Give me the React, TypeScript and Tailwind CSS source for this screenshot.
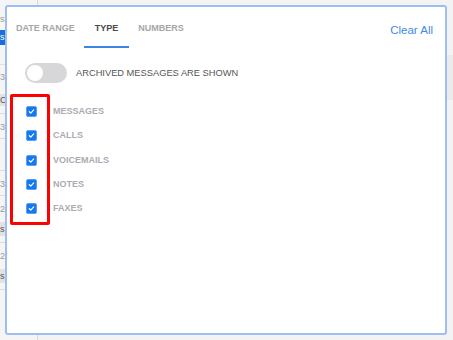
import React from "react";

const items = ["MESSAGES", "CALLS", "VOICEMAILS", "NOTES", "FAXES"];

function Check() {
  return (
    <div className="w-[11px] h-[11px] rounded-[2px] bg-[#1479f0] border border-[#5a9ef5] flex items-center justify-center shrink-0">
      <svg width="7" height="7" viewBox="0 0 8 8">
        <path d="M1.5 4.3 L3.2 5.8 L6.5 2.2" stroke="white" strokeWidth="1.4" fill="none" strokeLinecap="round" strokeLinejoin="round" />
      </svg>
    </div>
  );
}

function SideRow({ date, chip, blue }: { date?: string; chip?: string; blue?: boolean }) {
  return (
    <div className="border-b border-[#dcdcdc] pt-[8px] pb-[6px] flex flex-col gap-[8px]">
      {date && <div className="text-[9px] text-[#9a9a9a] leading-[10px]">{date}</div>}
      {chip && (
        <div className={`h-[14px] text-[9px] leading-[14px] ${blue ? "bg-[#1a6fd6] text-white" : "bg-[#e2e2e2] text-[#555]"}`}>{chip}</div>
      )}
    </div>
  );
}

export default function App() {
  return (
    <div className="relative w-[453px] h-[340px] overflow-hidden bg-[#f3f3f3]" style={{ fontFamily: '"Liberation Sans", Arial, sans-serif' }}>
      <div className="flex h-full">
        <div className="w-[38px] h-full bg-[#f5f5f5] border-r border-[#d9d9d9] flex flex-col">
          <div className="pt-[14px] text-[9px] leading-[10px] text-[#9a9a9a]">st</div>
          <div className="mt-[6px] h-[15px] bg-[#1a6fd6] text-white text-[9px] leading-[15px]">s</div>
          <div className="h-[20px] border-b border-[#e0e0e0]"></div>
          <div className="pt-[7px] text-[9px] leading-[10px] text-[#9a9a9a]">3/</div>
          <div className="mt-[12px] h-[12px] bg-[#e2e2e2] text-[9px] leading-[12px] text-[#555]">Ci</div>
          <div className="h-[8px] border-b border-[#dcdcdc]"></div>
          <SideRow date="3/" />
          <div className="h-[32px] border-b border-[#dcdcdc]"></div>
          <SideRow date="3/" />
          <SideRow date="2/" chip="s" />
          <SideRow date="2/" chip="s" />
        </div>
        <div className="flex-1 flex flex-col">
          <div className="h-[55px]"></div>
          <div className="h-[45px] bg-[#ebebeb]"></div>
        </div>
      </div>

      <div className="absolute left-[5px] top-[5px] w-[442px] h-[330px] bg-white border-2 border-[#9ebdf2] rounded-[3px]">
        <div className="flex justify-between items-start">
          <div className="flex pl-[9px] text-[9px] font-bold">
            <div className="pt-[16px] pb-[12px] leading-[11px] text-[#a6a6a6] border-b-2 border-transparent">DATE RANGE</div>
            <div className="ml-[9px] px-[11px] pt-[16px] pb-[12px] leading-[11px] text-[#4a4a4a] border-b-2 border-[#3a86e6]">TYPE</div>
            <div className="ml-[9px] pt-[16px] pb-[12px] leading-[11px] text-[#a6a6a6] border-b-2 border-transparent">NUMBERS</div>
          </div>
          <div className="pt-[16px] pr-[12px] text-[11.5px] leading-[14px] text-[#3d8be3]">Clear All</div>
        </div>

        <div className="mt-[15px] pl-[18px] flex items-center gap-[9px]">
          <div className="w-[42px] h-[20px] rounded-full bg-[#d7d7da] p-[2px] flex">
            <div className="w-[16px] h-[16px] rounded-full bg-white"></div>
          </div>
          <div className="text-[9.3px] text-[#555] leading-[12px]">ARCHIVED MESSAGES ARE SHOWN</div>
        </div>

        <div className="mt-[16.6px] pl-[19px] flex flex-col">
          {items.map((t) => (
            <div key={t} className="h-[24.25px] flex items-center gap-[16px]">
              <Check />
              <div className="text-[9px] font-bold text-[#ababb3] leading-[11px]">{t}</div>
            </div>
          ))}
        </div>

        <div className="absolute left-[3px] top-[87px] w-[40px] h-[131px] border-[3px] border-[#ff0000] rounded-[2px]"></div>
      </div>
    </div>
  );
}
